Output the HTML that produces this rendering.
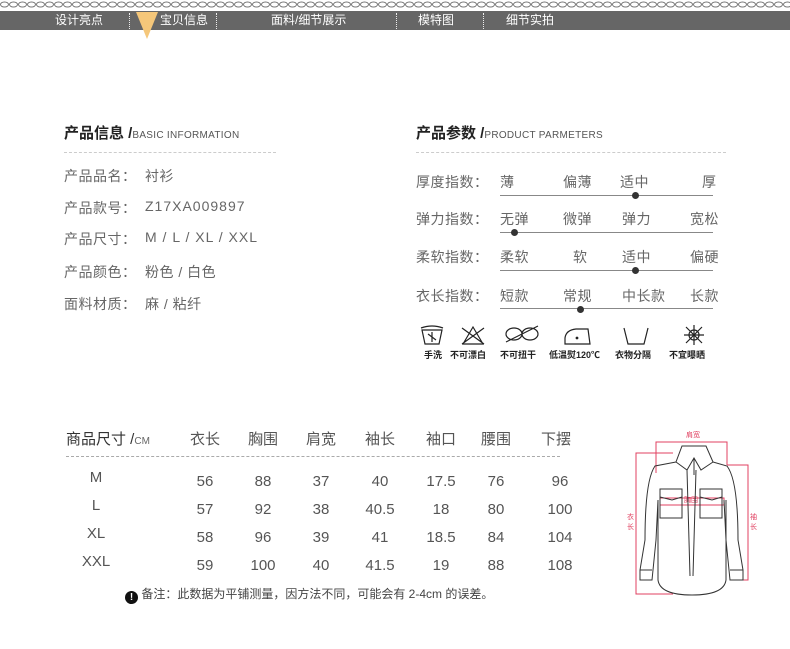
<!DOCTYPE html>
<html><head><meta charset="utf-8"><style>
*{margin:0;padding:0;box-sizing:border-box}
body{width:790px;height:649px;background:#fff;position:relative;overflow:hidden;font-family:"Liberation Sans","Noto Sans CJK SC",sans-serif;color:#555}
.a{position:absolute;white-space:nowrap}
.nav{position:absolute;left:0;top:11px;width:790px;height:19px;background:#666}
.nav span{position:absolute;top:1px;color:#fff;font-size:12px;line-height:17px}
.sep{position:absolute;top:2px;height:16px;border-left:1px dotted #eee}
.h{font-size:15px;color:#222;font-weight:bold}
.h small{font-size:10px;font-weight:normal;color:#555;letter-spacing:.3px}
.t{font-size:14px;color:#666;letter-spacing:.5px}
.line{position:absolute;height:1px;background:#888}
.dot{position:absolute;width:7px;height:7px;border-radius:50%;background:#333}
.c{position:absolute;text-align:center;width:60px;font-size:15px;color:#555}
.ic{position:absolute;font-size:9px;color:#222;font-weight:bold}
</style></head><body>
<svg class="a" style="left:0;top:0" width="790" height="9"><defs><pattern id="p" width="9" height="9" patternUnits="userSpaceOnUse"><ellipse cx="4.5" cy="4.5" rx="4" ry="2.5" fill="none" stroke="#777" stroke-width="1"/></pattern></defs><rect width="790" height="9" fill="url(#p)"/></svg>
<div class="nav">
<span style="left:55px">设计亮点</span>
<div class="sep" style="left:129px"></div>
<span style="left:160px">宝贝信息</span>
<div class="sep" style="left:216px"></div>
<span style="left:271px">面料/细节展示</span>
<div class="sep" style="left:396px"></div>
<span style="left:418px">模特图</span>
<div class="sep" style="left:483px"></div>
<span style="left:506px">细节实拍</span>
</div>
<svg class="a" style="left:136px;top:12px" width="24" height="28"><polygon points="0,0 22,0 11,27" fill="#f5c77a"/></svg>

<div class="a h" style="left:64px;top:122px">产品信息 /<small>BASIC INFORMATION</small></div>
<div class="a" style="left:64px;top:152px;width:212px;border-top:1px dashed #ccc"></div>
<div class="a t" style="left:64px;top:166px">产品品名：</div><div class="a t" style="left:145px;top:166px">衬衫</div>
<div class="a t" style="left:64px;top:198px">产品款号：</div><div class="a t" style="left:145px;top:198px;letter-spacing:1px">Z17XA009897</div>
<div class="a t" style="left:64px;top:229px">产品尺寸：</div><div class="a t" style="left:145px;top:229px;letter-spacing:1px">M / L / XL / XXL</div>
<div class="a t" style="left:64px;top:262px">产品颜色：</div><div class="a t" style="left:145px;top:262px">粉色 / 白色</div>
<div class="a t" style="left:64px;top:294px">面料材质：</div><div class="a t" style="left:145px;top:294px">麻 / 粘纤</div>

<div class="a h" style="left:416px;top:122px">产品参数 /<small>PRODUCT PARMETERS</small></div>
<div class="a" style="left:416px;top:152px;width:310px;border-top:1px dashed #ccc"></div>

<div class="a t" style="left:416px;top:172px">厚度指数：</div>
<div class="a t" style="left:500px;top:172px">薄</div><div class="a t" style="left:563px;top:172px">偏薄</div><div class="a t" style="left:620px;top:172px">适中</div><div class="a t" style="left:702px;top:172px">厚</div>
<div class="line" style="left:500px;top:195px;width:213px"></div><div class="dot" style="left:632px;top:192px"></div>

<div class="a t" style="left:416px;top:209px">弹力指数：</div>
<div class="a t" style="left:500px;top:209px">无弹</div><div class="a t" style="left:563px;top:209px">微弹</div><div class="a t" style="left:622px;top:209px">弹力</div><div class="a t" style="left:690px;top:209px">宽松</div>
<div class="line" style="left:500px;top:232px;width:213px"></div><div class="dot" style="left:511px;top:229px"></div>

<div class="a t" style="left:416px;top:247px">柔软指数：</div>
<div class="a t" style="left:500px;top:247px">柔软</div><div class="a t" style="left:573px;top:247px">软</div><div class="a t" style="left:622px;top:247px">适中</div><div class="a t" style="left:690px;top:247px">偏硬</div>
<div class="line" style="left:500px;top:270px;width:213px"></div><div class="dot" style="left:632px;top:267px"></div>

<div class="a t" style="left:416px;top:286px">衣长指数：</div>
<div class="a t" style="left:500px;top:286px">短款</div><div class="a t" style="left:563px;top:286px">常规</div><div class="a t" style="left:622px;top:286px">中长款</div><div class="a t" style="left:690px;top:286px">长款</div>
<div class="line" style="left:500px;top:308px;width:213px"></div><div class="dot" style="left:577px;top:306px"></div>

<svg class="a" style="left:418px;top:324px" width="310" height="24" fill="none" stroke="#222" stroke-width="1.2">
<path d="M4 6 L24 6 L21 20 L7 20 Z M3 4 Q14 0 25 4"/><path d="M10 10 L18 16 M14 8 L14 18"/>
<path d="M45 20 L55 3 L65 20 Z M44 4 L66 20 M66 4 L44 20"/>
<path d="M88 10 a8 6 0 1 1 16 0 a8 6 0 1 0 16 0 a8 6 0 1 0 -16 0 a8 6 0 1 1 -16 0 M88 18 L120 2"/>
<path d="M147 20 L147 14 Q148 6 158 5 L170 5 L172 20 Z"/><circle cx="159" cy="14" r="0.8" fill="#222"/>
<path d="M206 4 L210 20 L226 20 L230 4"/>
<circle cx="276" cy="11" r="5"/><path d="M268 3 L284 19 M284 3 L268 19 M276 1 L276 21 M266 11 L286 11"/>
</svg>
<div class="ic" style="left:424px;top:348px">手洗</div>
<div class="ic" style="left:450px;top:348px">不可漂白</div>
<div class="ic" style="left:500px;top:348px">不可扭干</div>
<div class="ic" style="left:549px;top:348px">低温熨120℃</div>
<div class="ic" style="left:615px;top:348px">衣物分隔</div>
<div class="ic" style="left:669px;top:348px">不宜曝晒</div>

<div class="a" style="left:66px;top:428px;font-size:15px;color:#333">商品尺寸 /<span style="font-size:10px;color:#666">CM</span></div>
<div class="c" style="left:175px;top:428px">衣长</div>
<div class="c" style="left:233px;top:428px">胸围</div>
<div class="c" style="left:291px;top:428px">肩宽</div>
<div class="c" style="left:350px;top:428px">袖长</div>
<div class="c" style="left:411px;top:428px">袖口</div>
<div class="c" style="left:466px;top:428px">腰围</div>
<div class="c" style="left:526px;top:428px">下摆</div>
<div class="a" style="left:66px;top:456px;width:494px;border-top:1px dashed #aaa"></div>

<div class="c" style="left:66px;top:469px">M</div><div class="c" style="left:66px;top:497px">L</div><div class="c" style="left:66px;top:525px">XL</div><div class="c" style="left:66px;top:553px">XXL</div>

<div class="c" style="left:175px;top:473px">56</div><div class="c" style="left:233px;top:473px">88</div><div class="c" style="left:291px;top:473px">37</div><div class="c" style="left:350px;top:473px">40</div><div class="c" style="left:411px;top:473px">17.5</div><div class="c" style="left:466px;top:473px">76</div><div class="c" style="left:530px;top:473px">96</div>
<div class="c" style="left:175px;top:501px">57</div><div class="c" style="left:233px;top:501px">92</div><div class="c" style="left:291px;top:501px">38</div><div class="c" style="left:350px;top:501px">40.5</div><div class="c" style="left:411px;top:501px">18</div><div class="c" style="left:466px;top:501px">80</div><div class="c" style="left:530px;top:501px">100</div>
<div class="c" style="left:175px;top:529px">58</div><div class="c" style="left:233px;top:529px">96</div><div class="c" style="left:291px;top:529px">39</div><div class="c" style="left:350px;top:529px">41</div><div class="c" style="left:411px;top:529px">18.5</div><div class="c" style="left:466px;top:529px">84</div><div class="c" style="left:530px;top:529px">104</div>
<div class="c" style="left:175px;top:557px">59</div><div class="c" style="left:233px;top:557px">100</div><div class="c" style="left:291px;top:557px">40</div><div class="c" style="left:350px;top:557px">41.5</div><div class="c" style="left:411px;top:557px">19</div><div class="c" style="left:466px;top:557px">88</div><div class="c" style="left:530px;top:557px">108</div>

<div class="a" style="left:125px;top:585px;font-size:12px;color:#444"><span style="display:inline-block;width:13px;height:13px;border-radius:50%;background:#111;color:#fff;text-align:center;font-size:10px;line-height:13px;font-weight:bold;vertical-align:-2px">!</span> 备注：此数据为平铺测量，因方法不同，可能会有 2-4cm 的误差。</div>

<svg class="a" style="left:600px;top:420px" width="190" height="190" fill="none" stroke="#333" stroke-width="1">
<g stroke="#e04060"><path d="M56 53 L56 22 L127 22 L127 45"/><path d="M73 33 L36 33 L36 174 L73 174"/><path d="M127 45 L148 45 L148 160 L132 160"/><path d="M60 78 L124 78 L124 85 L60 85 Z"/></g>
<g fill="#e04060" stroke="none" font-size="7" font-family="Liberation Sans,Noto Sans CJK SC,sans-serif"><text x="86" y="17">肩宽</text><text x="84" y="82" fill="#e04060">胸围</text><text x="27" y="99">衣</text><text x="27" y="109">长</text><text x="150" y="99">袖</text><text x="150" y="109">长</text></g>
<path d="M82 26 L106 26 L113 42 L101 50 L94 38 L87 50 L76 42 Z"/>
<path d="M76 42 L55 46 Q45 60 45 120 L40 150 L40 160 L52 160 L56 120 L58 80"/>
<path d="M113 42 L127 46 Q138 60 138 120 L143 150 L143 160 L130 160 L126 120 L124 80"/>
<path d="M58 80 L58 160 Q60 175 92 175 Q124 175 126 160 L126 80"/>
<path d="M87 50 L90 156 M96 50 L93 156 M94 38 L94 55"/>
<path d="M60 69 L82 69 L82 77 L72 80 L60 77 Z M60 77 L60 98 L82 98 L82 77"/>
<path d="M100 69 L122 69 L122 77 L112 80 L100 77 Z M100 77 L100 98 L122 98 L122 77"/>
<path d="M40 150 L52 150 M130 150 L143 150"/>
</svg>
</body></html>
